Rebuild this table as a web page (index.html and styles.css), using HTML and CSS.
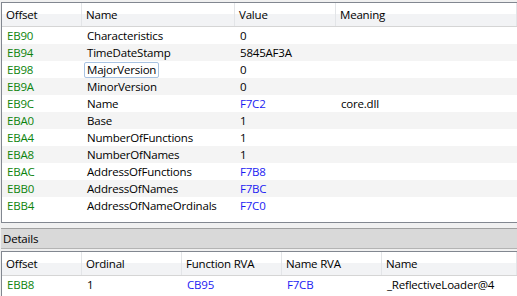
FILE: index.html
```html
<!DOCTYPE html>
<html>
<head>
<meta charset="utf-8">
<link rel="stylesheet" href="styles.css">
</head>
<body>
<div class="app">
  <div class="panel top">
    <div class="row head cols4">
      <div class="cell">Offset</div>
      <div class="cell">Name</div>
      <div class="cell">Value</div>
      <div class="cell">Meaning</div>
    </div>
    <div class="row cols4"><div class="cell off">EB90</div><div class="cell">Characteristics</div><div class="cell">0</div><div class="cell"></div></div>
    <div class="row cols4 alt"><div class="cell off">EB94</div><div class="cell">TimeDateStamp</div><div class="cell">5845AF3A</div><div class="cell"></div></div>
    <div class="row cols4"><div class="cell off">EB98</div><div class="cell"><span class="focus">MajorVersion</span></div><div class="cell">0</div><div class="cell"></div></div>
    <div class="row cols4 alt"><div class="cell off">EB9A</div><div class="cell">MinorVersion</div><div class="cell">0</div><div class="cell"></div></div>
    <div class="row cols4"><div class="cell off">EB9C</div><div class="cell">Name</div><div class="cell rva">F7C2</div><div class="cell">core.dll</div></div>
    <div class="row cols4 alt"><div class="cell off">EBA0</div><div class="cell">Base</div><div class="cell">1</div><div class="cell"></div></div>
    <div class="row cols4"><div class="cell off">EBA4</div><div class="cell">NumberOfFunctions</div><div class="cell">1</div><div class="cell"></div></div>
    <div class="row cols4 alt"><div class="cell off">EBA8</div><div class="cell">NumberOfNames</div><div class="cell">1</div><div class="cell"></div></div>
    <div class="row cols4"><div class="cell off">EBAC</div><div class="cell">AddressOfFunctions</div><div class="cell rva">F7B8</div><div class="cell"></div></div>
    <div class="row cols4 alt"><div class="cell off">EBB0</div><div class="cell">AddressOfNames</div><div class="cell rva">F7BC</div><div class="cell"></div></div>
    <div class="row cols4"><div class="cell off">EBB4</div><div class="cell">AddressOfNameOrdinals</div><div class="cell rva">F7C0</div><div class="cell"></div></div>
  </div>
  <div class="splitter"></div>
  <div class="details-bar">Details</div>
  <div class="panel bottom">
    <div class="row head cols5">
      <div class="cell">Offset</div>
      <div class="cell">Ordinal</div>
      <div class="cell">Function RVA</div>
      <div class="cell">Name RVA</div>
      <div class="cell">Name</div>
    </div>
    <div class="row cols5"><div class="cell off">EBB8</div><div class="cell">1</div><div class="cell rva">CB95</div><div class="cell rva">F7CB</div><div class="cell">_ReflectiveLoader@4</div></div>
  </div>
</div>
</body>
</html>
```
FILE: styles.css
```css
html, body {
  margin: 0;
  padding: 0;
  background: #f0f0f0;
}
body {
  font-family: "Open Sans", "Noto Sans", sans-serif;
  font-size: 11.5px;
  letter-spacing: -0.2px;
  color: #000;
  width: 517px;
  height: 296px;
  overflow: hidden;
}
.app {
  display: flex;
  flex-direction: column;
  padding-top: 2px;
  padding-left: 1px;
}
.panel {
  background: #fff;
  border: 1px solid #828790;
  border-right: none;
}
.panel.top {
  height: 219px;
}
.panel.bottom {
  height: 44px;
  border-bottom: none;
}
.row {
  display: grid;
  height: 17px;
  align-items: center;
}
.cols4 { grid-template-columns: 80px 153px 101px 1fr; }
.cols5 { grid-template-columns: 80px 100px 100px 100px 1fr; }
.row.alt { background: #f4f4f4; }
.cell {
  padding-left: 5px;
  white-space: nowrap;
  line-height: 17px;
  height: 17px;
}
.row.head {
  height: 23px;
  border-bottom: 1px solid #d5d5d5;
  background: linear-gradient(#ffffff 0, #ffffff 50%, #f2f3f5 50%, #f2f3f5 100%);
  align-items: stretch;
}
.row.head .cell {
  height: 23px;
  line-height: 23px;
  border-right: 1px solid #e3e5e8;
  padding-left: 4px;
}
.off { color: #0c830c; }
.rva { color: #1c1cf2; }
.focus {
  display: inline-block;
  margin-left: -3px;
  padding: 0 2px;
  line-height: 14px;
  border: 1px solid #a9c3e2;
  border-radius: 2px;
}
.splitter {
  height: 5px;
  background: #f0f0f0;
}
.details-bar {
  height: 19px;
  line-height: 19px;
  background: #d9d9d9;
  border-top: 1px solid #a0a0a0;
  border-bottom: 1px solid #b4b4b4;
  margin-bottom: 2px;
  padding-left: 2px;
}
```
